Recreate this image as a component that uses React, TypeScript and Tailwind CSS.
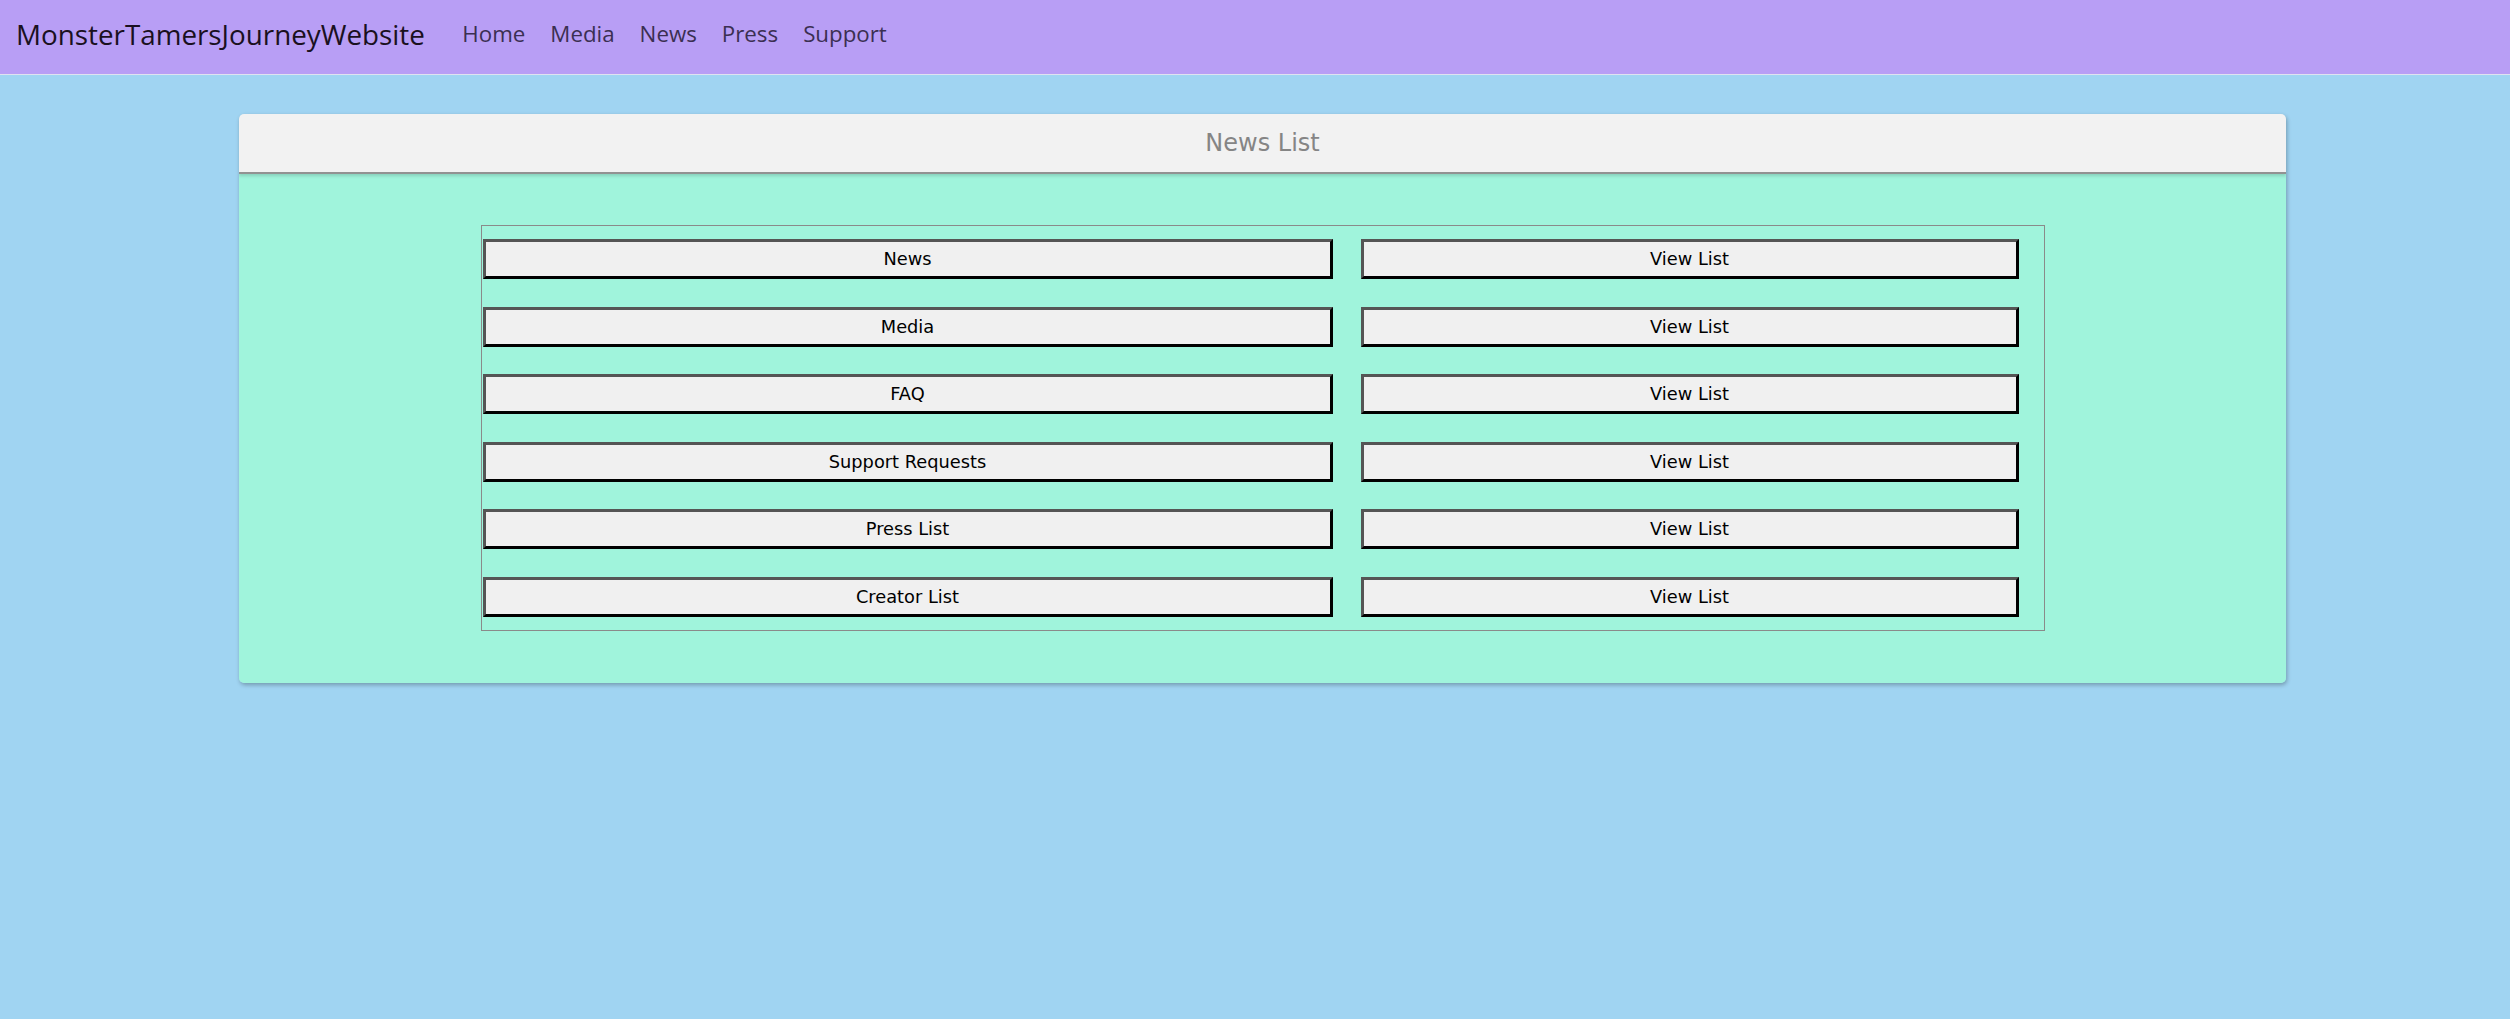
import React from "react";

const rows = ["News", "Media", "FAQ", "Support Requests", "Press List", "Creator List"];

function Btn({ label, w }: { label: string; w: string }) {
  return (
    <button
      className={`${w} h-[40px] bg-[#f0f0f0] border-[3px] border-t-[#555555] border-l-[#555555] border-b-black border-r-black text-black text-[17.8px] leading-none flex items-center justify-center`}
      style={{ fontFamily: '"DejaVu Sans", sans-serif' }}
    >
      {label}
    </button>
  );
}

export default function App() {
  return (
    <div className="min-h-screen w-full bg-[#a0d4f2]">
      <nav
        className="h-[75px] bg-[#b89ef5] border-b border-[#dfe2f0] flex items-center pl-[16px] pb-[5px]"
        style={{ fontFamily: '"Open Sans", sans-serif' }}
      >
        <span className="text-[27.8px] text-[#1a1020] mr-[25px] leading-none">MonsterTamersJourneyWebsite</span>
        <div className="flex items-center">
          {["Home", "Media", "News", "Press", "Support"].map((n) => (
            <span key={n} className="px-[12.5px] text-[22.3px] text-[#3b2f52] leading-none">
              {n}
            </span>
          ))}
        </div>
      </nav>
      <div className="pt-[39px]">
        <div className="ml-[239px] w-[2047px] rounded-[5px] overflow-hidden shadow-[1px_2px_4px_rgba(0,0,0,0.28)]">
          <div
            className="h-[60px] bg-[#f2f2f2] border-b-2 border-[#929292] flex items-center justify-center text-[24px] text-[#858585] shadow-[0_2px_3px_rgba(0,0,0,0.15)] relative"
            style={{ fontFamily: '"DejaVu Sans", sans-serif' }}
          >
            News List
          </div>
          <div className="bg-[#a0f4dc] pt-[51px] pb-[52px] flex justify-center">
            <div className="w-[1564px] border border-[#8a8a8a] pl-[1px] py-[13px] grid grid-cols-[850px_658px] gap-x-[28px] gap-y-[27.6px]">
              {rows.map((r) => (
                <React.Fragment key={r}>
                  <Btn label={r} w="w-[850px]" />
                  <Btn label="View List" w="w-[658px]" />
                </React.Fragment>
              ))}
            </div>
          </div>
        </div>
      </div>
    </div>
  );
}
